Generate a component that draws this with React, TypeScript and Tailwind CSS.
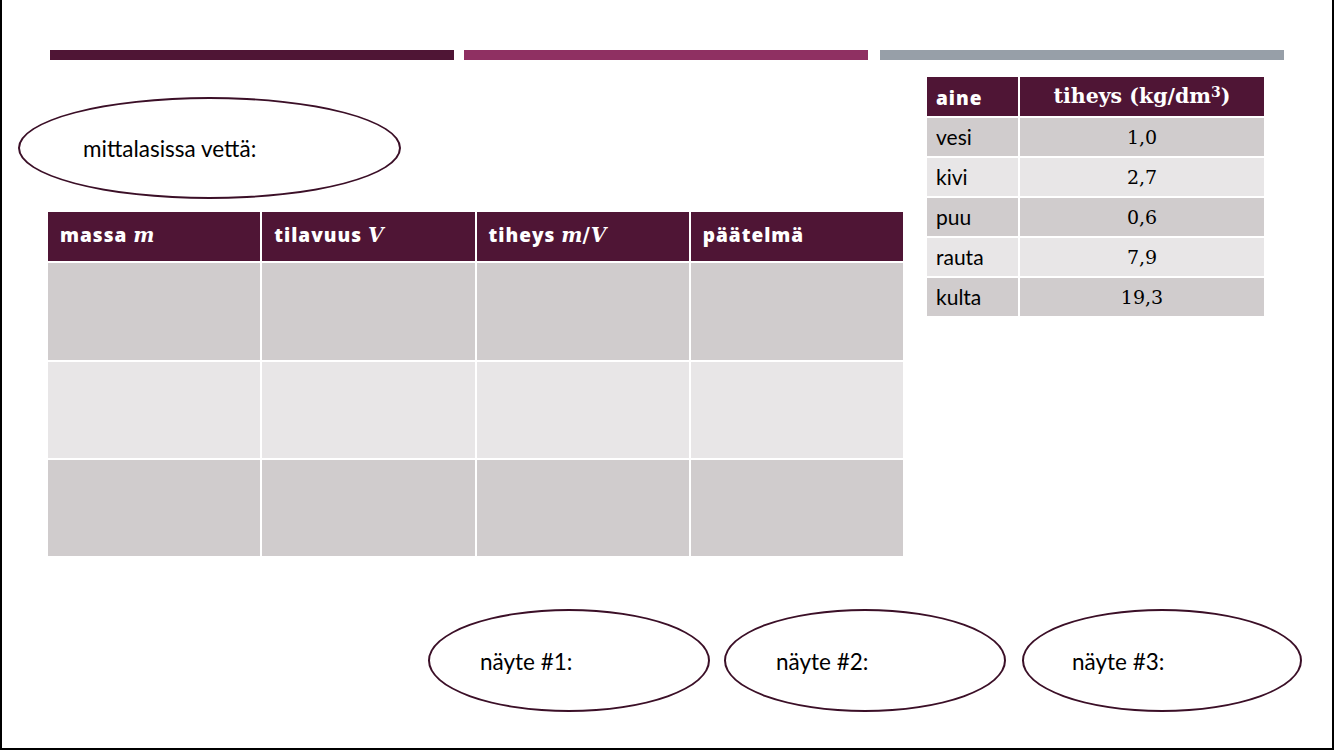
import React from "react";

const sans = "font-['Lato','Open_Sans',sans-serif]";
const bsans = "font-['Open_Sans','Lato',sans-serif]";
const serif = "font-['DejaVu_Serif','Liberation_Serif',serif]";

function Oval({ w, h, label, textLeft, className = "" }: { w: string; h: string; label: string; textLeft: string; className?: string }) {
  return (
    <div className={`${w} ${h} ${className} shrink-0 rounded-[50%] border-2 border-[#3b0f27] flex items-center bg-white`}>
      <span className={`${textLeft} ${sans} text-[22.5px] text-black leading-none mt-[3px]`}>{label}</span>
    </div>
  );
}

export default function App() {
  const mainRows = [0, 1, 2];
  const dens = [
    ["vesi", "1,0"],
    ["kivi", "2,7"],
    ["puu", "0,6"],
    ["rauta", "7,9"],
    ["kulta", "19,3"],
  ];
  const mi = `${serif} italic font-bold text-[20px] tracking-normal`;
  return (
    <div className="w-[1334px] h-[750px] bg-white border-l-2 border-r-2 border-b-2 border-black overflow-hidden flex flex-col">
      {/* bars */}
      <div className="flex mt-[50px] ml-[48px] h-[10px]">
        <div className="w-[404px] h-full bg-[#4f1535]" />
        <div className="w-[404px] h-full bg-[#8f3062] ml-[10px]" />
        <div className="w-[404px] h-full bg-[#979fa8] ml-[12px]" />
      </div>

      <div className="flex">
        {/* left column */}
        <div className="flex flex-col">
          <Oval w="w-[383px]" h="h-[102px]" className="mt-[37px] ml-[16px]" label="mittalasissa vettä:" textLeft="ml-[63px]" />
          <div className="mt-[13px] ml-[46px] w-[855px] grid grid-cols-4 gap-[2px] bg-white">
            {[
              <>massa <span className={mi}>m</span></>,
              <>tilavuus <span className={mi}>V</span></>,
              <>tiheys <span className={mi}>m</span><span className={`${serif} font-bold text-[20px]`}>/</span><span className={mi}>V</span></>,
              <>päätelmä</>,
            ].map((h, i) => (
              <div key={i} className={`h-[49px] bg-[#4f1535] text-white font-extrabold ${bsans} text-[19px] pl-[12px] pt-[10px] leading-[26px] tracking-[1px]`}>
                {h}
              </div>
            ))}
            {mainRows.map((r) =>
              [0, 1, 2, 3].map((c) => (
                <div key={`${r}-${c}`} className={`${r === 0 ? "h-[97px]" : "h-[96px]"} ${r === 1 ? "bg-[#e8e6e7]" : "bg-[#d0cccd]"}`} />
              ))
            )}
          </div>
        </div>

        {/* right table */}
        <div className="mt-[17px] ml-[24px] w-[337px] grid grid-cols-[91px_244px] gap-[2px] bg-white self-start">
          <div className={`h-[39px] bg-[#4f1535] text-white font-extrabold ${bsans} text-[19px] pl-[9px] flex items-center pt-[3px] tracking-[1px]`}>aine</div>
          <div className={`h-[39px] bg-[#4f1535] text-white font-bold ${serif} text-[20.5px] flex items-center justify-center`}>
            tiheys (kg/dm<span className="text-[14px] self-start mt-[5px]">3</span>)
          </div>
          {dens.map(([n, v], i) => (
            <React.Fragment key={n}>
              <div className={`h-[38px] ${i % 2 === 0 ? "bg-[#d0cccd]" : "bg-[#e8e6e7]"} ${sans} text-[21px] text-black pl-[9px] flex items-center`}>{n}</div>
              <div className={`h-[38px] ${i % 2 === 0 ? "bg-[#d0cccd]" : "bg-[#e8e6e7]"} ${serif} text-[19px] text-black flex items-center justify-center`}>{v}</div>
            </React.Fragment>
          ))}
        </div>
      </div>

      {/* bottom ovals */}
      <div className="flex mt-[53px] ml-[426px]">
        <Oval w="w-[282px]" h="h-[103px]" label="näyte #1:" textLeft="ml-[50px]" />
        <Oval w="w-[282px]" h="h-[103px]" className="ml-[14px]" label="näyte #2:" textLeft="ml-[50px]" />
        <Oval w="w-[280px]" h="h-[103px]" className="ml-[16px]" label="näyte #3:" textLeft="ml-[48px]" />
      </div>
    </div>
  );
}
